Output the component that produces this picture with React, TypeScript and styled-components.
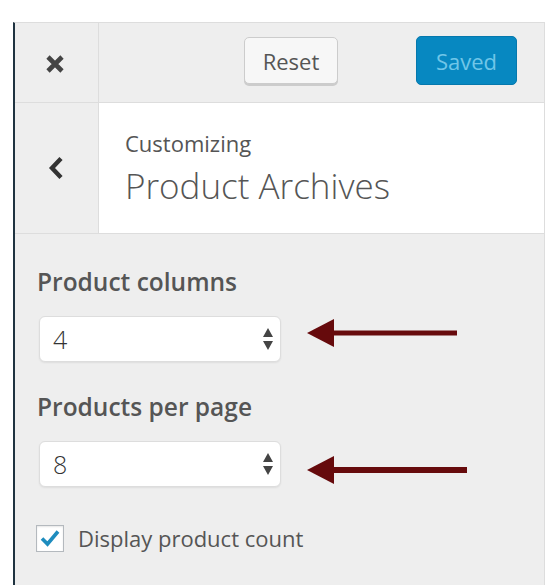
import React from 'react';
import styled, { createGlobalStyle } from 'styled-components';

const GlobalStyle = createGlobalStyle`
  html, body {
    margin: 0;
    padding: 0;
    background: #fff;
    font-family: "Open Sans", "Noto Sans", Arial, sans-serif;
    color: #555;
  }
  * {
    box-sizing: border-box;
  }
`;

const settings = [
  { label: 'Product columns', value: '4', arrowWidth: 150, thick: 5, shift: -6 },
  { label: 'Products per page', value: '8', arrowWidth: 160, thick: 6, shift: 6 },
];

const CloseIcon = () => (
  <svg width="20" height="20" viewBox="0 0 20 20">
    <path d="M3 3 L17 17 M17 3 L3 17" stroke="#444" strokeWidth="4.6" fill="none" />
  </svg>
);

const BackIcon = () => (
  <svg width="16" height="24" viewBox="0 0 16 24">
    <path d="M13 2.5 L4 12 L13 21.5" stroke="#333" strokeWidth="4.4" fill="none" />
  </svg>
);

const SortIcon = () => (
  <svg width="10" height="22" viewBox="0 0 10 22">
    <path d="M5 0 L10 9 L0 9 Z M0 13 L10 13 L5 22 Z" fill="#444" />
  </svg>
);

const CheckIcon = () => (
  <svg width="20" height="18" viewBox="0 0 20 18">
    <path d="M2 9.5 L7.5 15 L18 2.5" stroke="#1e8cbe" strokeWidth="3.6" fill="none" />
  </svg>
);

const Arrow = ({ width, thick }: { width: number; thick: number }) => (
  <svg width={width} height="28" viewBox={`0 0 ${width} 28`}>
    <polygon points="0,14 27,0 27,28" fill="#660a0c" />
    <rect x="26" y={14 - thick / 2} width={width - 26} height={thick} fill="#660a0c" />
  </svg>
);

const App = () => {
  return (
    <>
      <GlobalStyle />
      <Page>
        <Panel>
          <Header>
            <CloseButton aria-label="Close">
              <CloseIcon />
            </CloseButton>
            <Actions>
              <ResetButton>Reset</ResetButton>
              <SavedButton>Saved</SavedButton>
            </Actions>
          </Header>
          <TitleSection>
            <BackButton aria-label="Back">
              <BackIcon />
            </BackButton>
            <TitleBlock>
              <Eyebrow>Customizing</Eyebrow>
              <Title>Product Archives</Title>
            </TitleBlock>
          </TitleSection>
          <Controls>
            {settings.map((s) => (
              <Field key={s.label}>
                <Label>{s.label}</Label>
                <SelectRow>
                  <SelectWrap>
                    <Select defaultValue={s.value}>
                      <option>{s.value}</option>
                    </Select>
                    <SelectIcon>
                      <SortIcon />
                    </SelectIcon>
                  </SelectWrap>
                  <Pointer $shift={s.shift}>
                    <Arrow width={s.arrowWidth} thick={s.thick} />
                  </Pointer>
                </SelectRow>
              </Field>
            ))}
            <CheckRow>
              <CheckBox>
                <CheckIcon />
              </CheckBox>
              <CheckLabel>Display product count</CheckLabel>
            </CheckRow>
          </Controls>
        </Panel>
      </Page>
    </>
  );
};

const Page = styled.div`
  padding: 22px 13px 0 13px;
`;
const Panel = styled.div`
  width: 532px;
  min-height: 563px;
  background: #eee;
  border-top: 1px solid #ddd;
  border-left: 2px solid #1f3340;
  border-right: 1px solid #ddd;
`;
const Header = styled.div`
  display: flex;
  height: 80px;
  border-bottom: 1px solid #ddd;
`;
const CloseButton = styled.div`
  width: 84px;
  display: flex;
  align-items: center;
  justify-content: center;
  border-right: 1px solid #ddd;
  padding-right: 4px;
  padding-top: 2px;
`;
const Actions = styled.div`
  flex: 1;
  display: flex;
  align-items: center;
  justify-content: flex-end;
  gap: 78px;
  padding-right: 27px;
  padding-bottom: 4px;
`;
const ResetButton = styled.button`
  width: 94px;
  height: 47px;
  background: #f7f7f7;
  border: 1px solid #ccc;
  border-radius: 5px;
  box-shadow: 0 2px 0 #ccc;
  font-family: inherit;
  font-size: 22px;
  color: #555;
  padding: 0;
`;
const SavedButton = styled.button`
  width: 101px;
  height: 49px;
  background: #0788c1;
  border: 1px solid #0578ad;
  border-radius: 5px;
  font-family: inherit;
  font-size: 22px;
  color: #70c6e8;
  padding: 0;
`;
const TitleSection = styled.div`
  display: flex;
  height: 131px;
  background: #fff;
  border-bottom: 1px solid #ddd;
`;
const BackButton = styled.div`
  width: 84px;
  background: #eee;
  border-right: 1px solid #ddd;
  display: flex;
  align-items: center;
  justify-content: center;
  padding-right: 1px;
`;
const TitleBlock = styled.div`
  display: flex;
  flex-direction: column;
  padding: 25px 0 0 26px;
`;
const Eyebrow = styled.span`
  font-size: 22px;
  line-height: 30px;
  color: #555;
`;
const Title = styled.h1`
  margin: 7px 0 0;
  font-size: 35px;
  line-height: 42px;
  font-weight: 300;
  color: #555;
`;
const Controls = styled.div`
  display: flex;
  flex-direction: column;
  padding: 33px 0 0 22px;
`;
const Field = styled.div`
  display: flex;
  flex-direction: column;
  margin-bottom: 30px;
`;
const Label = styled.label`
  font-size: 24.5px;
  line-height: 30px;
  font-weight: 600;
  color: #555;
`;
const SelectRow = styled.div`
  display: flex;
  align-items: center;
  margin-top: 19px;
`;
const SelectWrap = styled.div`
  position: relative;
  width: 242px;
  height: 46px;
  margin-left: 2px;
`;
const Select = styled.select`
  appearance: none;
  width: 100%;
  height: 100%;
  background: #fff;
  border: 1px solid #ddd;
  border-radius: 6px;
  box-shadow: 0 1px 2px rgba(0, 0, 0, 0.07);
  padding: 0 0 0 13px;
  font-family: inherit;
  font-size: 25px;
  font-weight: 300;
  color: #333;
  outline: none;
`;
const SelectIcon = styled.span`
  position: absolute;
  right: 8px;
  top: 12px;
  display: flex;
  pointer-events: none;
`;
const Pointer = styled.div<{ $shift: number }>`
  display: flex;
  margin-left: 26px;
  transform: translateY(${(p) => p.$shift}px);
`;
const CheckRow = styled.div`
  display: flex;
  align-items: center;
  gap: 14px;
  margin-top: 6px;
  margin-left: -1px;
`;
const CheckBox = styled.span`
  width: 28px;
  height: 27px;
  background: #fff;
  border: 1px solid #b4b9be;
  display: flex;
  align-items: center;
  justify-content: center;
  box-shadow: inset 0 1px 2px rgba(0, 0, 0, 0.1);
`;
const CheckLabel = styled.span`
  font-size: 22px;
  color: #555;
`;

export default App;
